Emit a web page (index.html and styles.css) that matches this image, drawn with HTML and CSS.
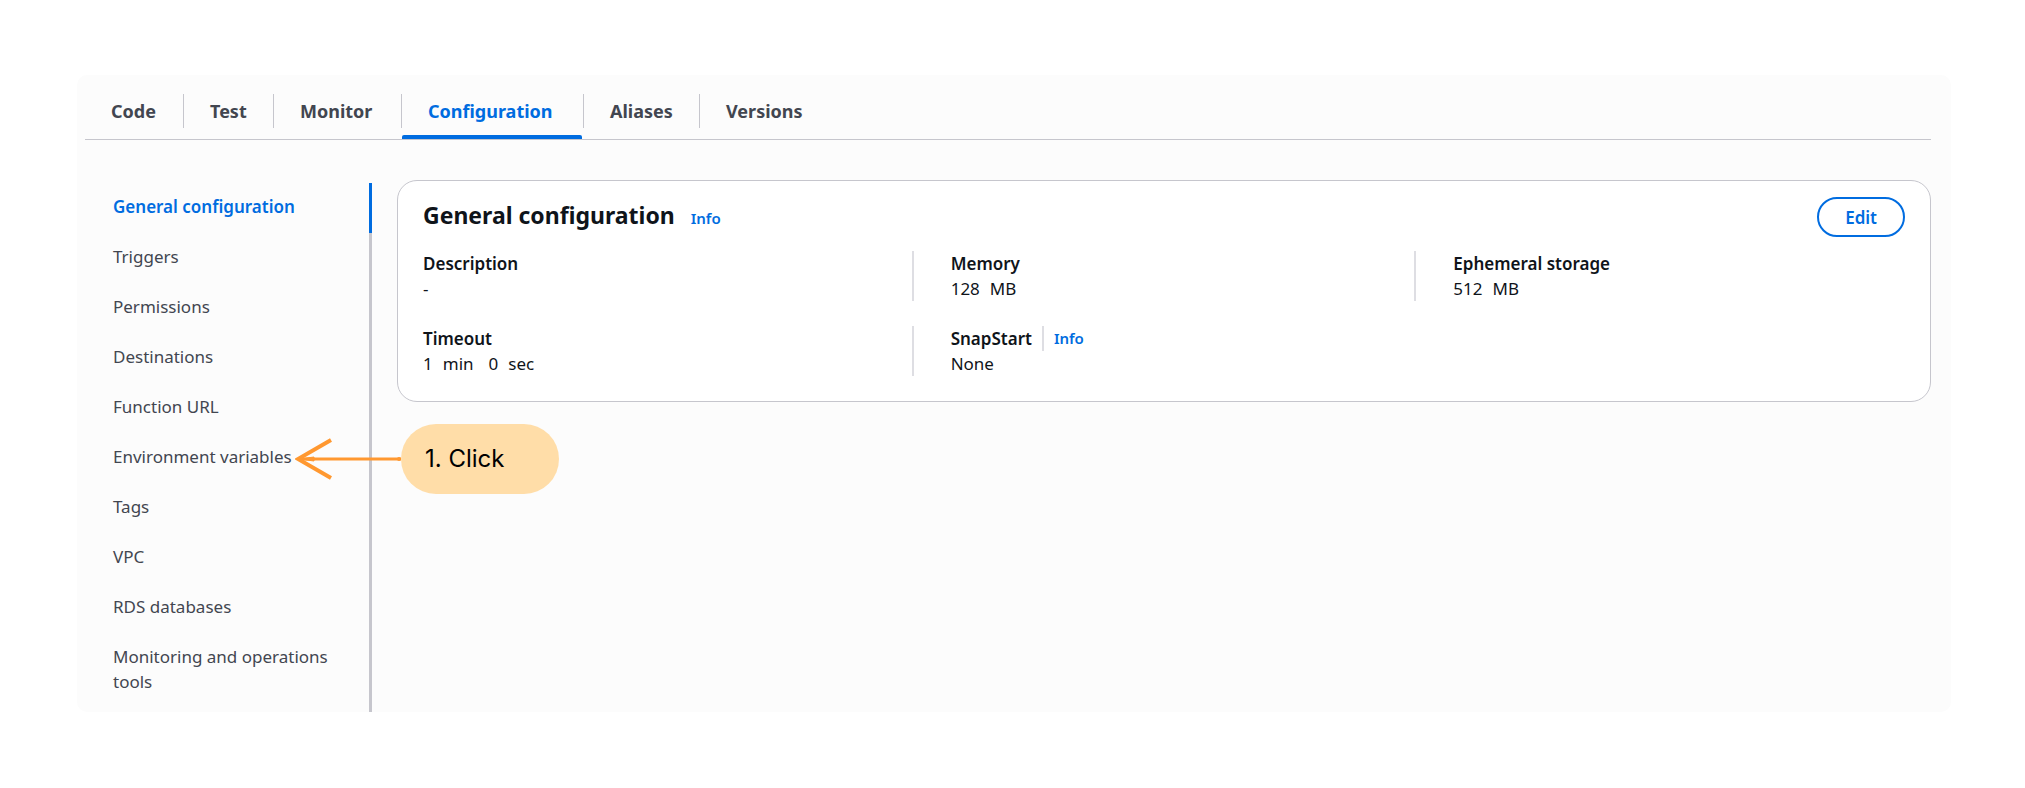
FILE: index.html
```html
<!DOCTYPE html>
<html lang="en">
<head>
<meta charset="utf-8">
<meta name="viewport" content="width=device-width, initial-scale=1">
<title>Function configuration</title>
<link rel="stylesheet" href="styles.css">
</head>
<body>
<main class="panel">
  <nav class="tabs" aria-label="Function sections">
    <a class="tab" href="#code">Code</a>
    <a class="tab" href="#test">Test</a>
    <a class="tab" href="#monitor">Monitor</a>
    <a class="tab tab-active" href="#configuration" aria-current="page">Configuration</a>
    <a class="tab" href="#aliases">Aliases</a>
    <a class="tab" href="#versions">Versions</a>
  </nav>
  <div class="body">
    <nav class="side" aria-label="Configuration sections">
      <ul class="side-list">
        <li class="side-item side-active"><a href="#general" aria-current="true">General configuration</a></li>
        <li class="side-item"><a href="#triggers">Triggers</a></li>
        <li class="side-item"><a href="#permissions">Permissions</a></li>
        <li class="side-item"><a href="#destinations">Destinations</a></li>
        <li class="side-item"><a href="#url">Function URL</a></li>
        <li class="side-item">
          <a href="#env">Environment variables</a>
          <div class="callout">
            <svg class="callout-arrow" width="106" height="44" viewBox="0 0 106 44" fill="none" stroke="#ff9830" stroke-width="3" aria-hidden="true">
              <path d="M3 22H106"/>
              <path d="M36 3L3 22L36 41" stroke-width="4"/>
              <path d="M4 22L19 20V24Z" fill="#ff9830" stroke-width="1"/>
              <circle cx="104" cy="22" r="2" fill="#ff9830" stroke="none"/>
            </svg>
            <span class="callout-label">1. Click</span>
          </div>
        </li>
        <li class="side-item"><a href="#tags">Tags</a></li>
        <li class="side-item"><a href="#vpc">VPC</a></li>
        <li class="side-item"><a href="#rds">RDS databases</a></li>
        <li class="side-item"><a href="#tools">Monitoring and operations tools</a></li>
      </ul>
    </nav>
    <section class="card">
      <header class="card-head">
        <h2 class="card-title">General configuration</h2>
        <a class="info" href="#info">Info</a>
        <button class="edit" type="button">Edit</button>
      </header>
      <dl class="fields">
        <div class="field">
          <dt>Description</dt>
          <dd>-</dd>
        </div>
        <div class="field">
          <dt>Memory</dt>
          <dd><span>128</span><span>MB</span></dd>
        </div>
        <div class="field">
          <dt>Ephemeral storage</dt>
          <dd><span>512</span><span>MB</span></dd>
        </div>
        <div class="field">
          <dt>Timeout</dt>
          <dd><span>1</span><span>min</span><span class="part">0</span><span>sec</span></dd>
        </div>
        <div class="field">
          <dt>SnapStart<a class="info info-split" href="#snapstart">Info</a></dt>
          <dd>None</dd>
        </div>
      </dl>
    </section>
  </div>
</main>
</body>
</html>
```

FILE: styles.css
```css
* { box-sizing: border-box; }

body {
  margin: 0;
  padding: 75px 74px 75px 77px;
  background: #fff;
  color: #0f141a;
  font: 17px/25px "Noto Sans", "Open Sans", sans-serif;
}

a { color: inherit; text-decoration: none; }

.panel {
  padding: 0 20px 0 8px;
  background: #fcfcfc;
  border-radius: 10px;
}

.tabs {
  display: grid;
  grid-template-columns: 99px 90px 128px 182px 116px auto;
  padding-top: 19px;
  border-bottom: 1px solid #c6c6cd;
}

.tab {
  position: relative;
  height: 45px;
  padding-left: 26px;
  color: #424650;
  font-size: 18px;
  font-weight: 700;
  line-height: 34px;
}

.tab:not(:last-child)::after {
  content: "";
  position: absolute;
  top: 0;
  right: 0;
  width: 1px;
  height: 34px;
  background: #c6c6cd;
}

.tab-active { color: #006ce0; }

.tab-active::before {
  content: "";
  position: absolute;
  right: 2px;
  bottom: 0;
  left: 0;
  height: 4px;
  background: #006ce0;
  border-radius: 2px 2px 0 0;
}

.body {
  display: flex;
  align-items: flex-start;
  gap: 25px;
  padding-top: 40px;
}

.side {
  flex: 0 0 287px;
  margin-top: 3px;
  border-right: 3px solid #c6c6cd;
}

.side-list {
  margin: 0;
  padding: 0 0 4px;
  list-style: none;
}

.side-item {
  position: relative;
  padding: 11px 40px 14px 28px;
  color: #424650;
}

.side-active { color: #006ce0; font-weight: 600; }

.side-active::after {
  content: "";
  position: absolute;
  top: 0;
  right: -3px;
  bottom: 0;
  width: 3px;
  background: #006ce0;
}

.callout {
  position: absolute;
  top: -9px;
  left: 210px;
  z-index: 1;
  display: flex;
  align-items: center;
}

.callout-label {
  width: 158px;
  padding: 0 24px;
  background: #ffdda8;
  border-radius: 35px;
  color: #000;
  font: 24px/70px Inter, sans-serif;
}

.card {
  flex: 1;
  min-width: 0;
  padding: 16px 25px 25px;
  background: #fff;
  border: 1px solid #c6c6cd;
  border-radius: 20px;
}

.card-head {
  display: flex;
  align-items: baseline;
  gap: 16px;
}

.card-title {
  margin: 0;
  font-size: 23px;
  font-weight: 700;
  line-height: 30px;
}

.info {
  color: #006ce0;
  font-size: 15px;
  font-weight: 600;
}

.edit {
  height: 40px;
  margin-left: auto;
  padding: 0 26px;
  background: #fff;
  border: 2px solid #006ce0;
  border-radius: 20px;
  color: #006ce0;
  font: inherit;
  font-weight: 600;
}

.fields {
  display: grid;
  grid-template-columns: 488fr 502fr 490fr;
  row-gap: 25px;
  margin: 14px 0 0;
}

.field:not(:nth-child(3n + 1)) {
  padding-left: 37px;
  border-left: 2px solid #dedee3;
}

.field dt { display: flex; font-weight: 600; }
.field dd { display: flex; gap: 10px; margin: 0; }
.part { margin-left: 5px; }

.info-split {
  margin-left: 10px;
  padding-left: 10px;
  border-left: 2px solid #dedee3;
}
```
